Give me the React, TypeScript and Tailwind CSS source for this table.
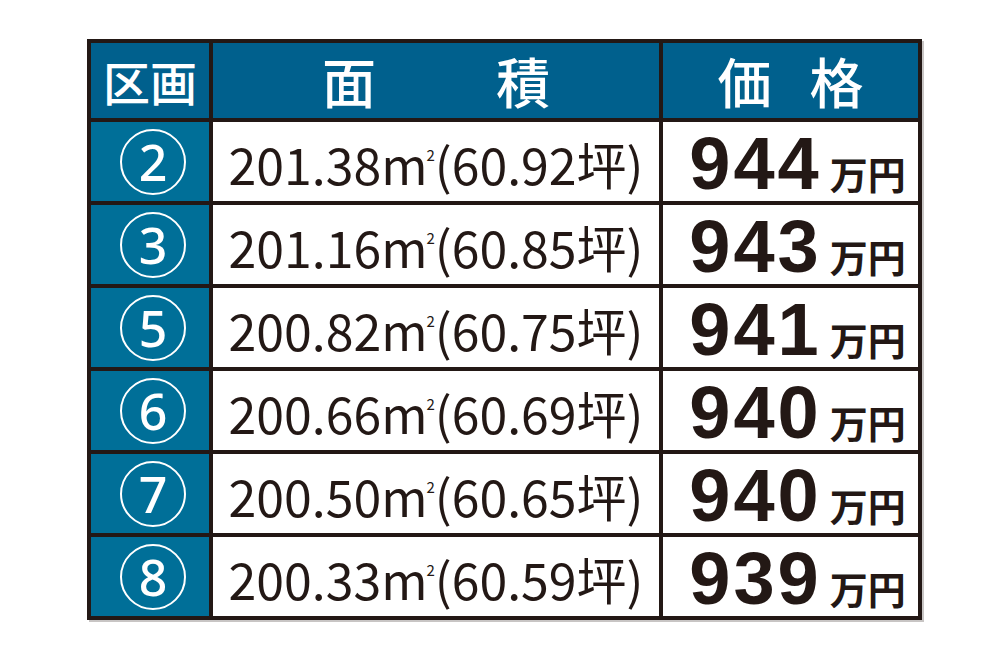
import React from 'react';

const rows = [
  { no: '2', area: '201.38', tsubo: '60.92', price: '944' },
  { no: '3', area: '201.16', tsubo: '60.85', price: '943' },
  { no: '5', area: '200.82', tsubo: '60.75', price: '941' },
  { no: '6', area: '200.66', tsubo: '60.69', price: '940' },
  { no: '7', area: '200.50', tsubo: '60.65', price: '940' },
  { no: '8', area: '200.33', tsubo: '60.59', price: '939' },
];

const jp = "font-['Noto_Sans_CJK_JP','Noto_Sans',sans-serif]";

export default function App() {
  return (
    <div className="w-[1000px] h-[667px] bg-white pt-[39px] pl-[87px]">
      <div className="grid grid-cols-[118px_446px_255px] grid-rows-[75px_repeat(6,79px)] gap-[4px] p-[4px] bg-[#231815] w-fit shadow-[2px_2px_0_#c8c5c4]">
        {/* Header */}
        <div className={`bg-[#00608d] flex items-center justify-center text-white text-[47px] font-medium leading-none ${jp}`}>
          区画
        </div>
        <div className={`bg-[#00608d] flex items-center justify-center text-white text-[54px] font-medium leading-none ${jp}`}>
          <span>面</span>
          <span className="ml-[120px]">積</span>
        </div>
        <div className={`bg-[#00608d] flex items-center justify-center text-white text-[54px] font-medium leading-none ${jp}`}>
          <span>価</span>
          <span className="ml-[38px]">格</span>
        </div>

        {/* Rows */}
        {rows.map((r) => (
          <React.Fragment key={r.no}>
            <div className="bg-[#006f98] flex items-center justify-center pl-[6px]">
              <div className="w-[66px] h-[66px] rounded-full border-[2.5px] border-white flex items-center justify-center text-white text-[50px] leading-none font-['Noto_Sans',sans-serif] font-medium">
                {r.no}
              </div>
            </div>
            <div className={`bg-white flex items-center justify-center text-[#231815] text-[50px] leading-none ${jp}`}>
              <span className="mt-[3px] whitespace-nowrap">
                {r.area}m<span className="inline-block text-[15px] relative -top-[24px] -ml-[1px]">2</span>({r.tsubo}坪)
              </span>
            </div>
            <div className="bg-white flex items-end justify-center pl-[14px] text-[#231815]">
              <span className="font-['Liberation_Sans',Arial,sans-serif] font-bold text-[74px] leading-none tracking-[3px]">
                {r.price}
              </span>
              <span className={`${jp} font-bold text-[38px] leading-none ml-[8px] mb-[9px]`}>万円</span>
            </div>
          </React.Fragment>
        ))}
      </div>
    </div>
  );
}
